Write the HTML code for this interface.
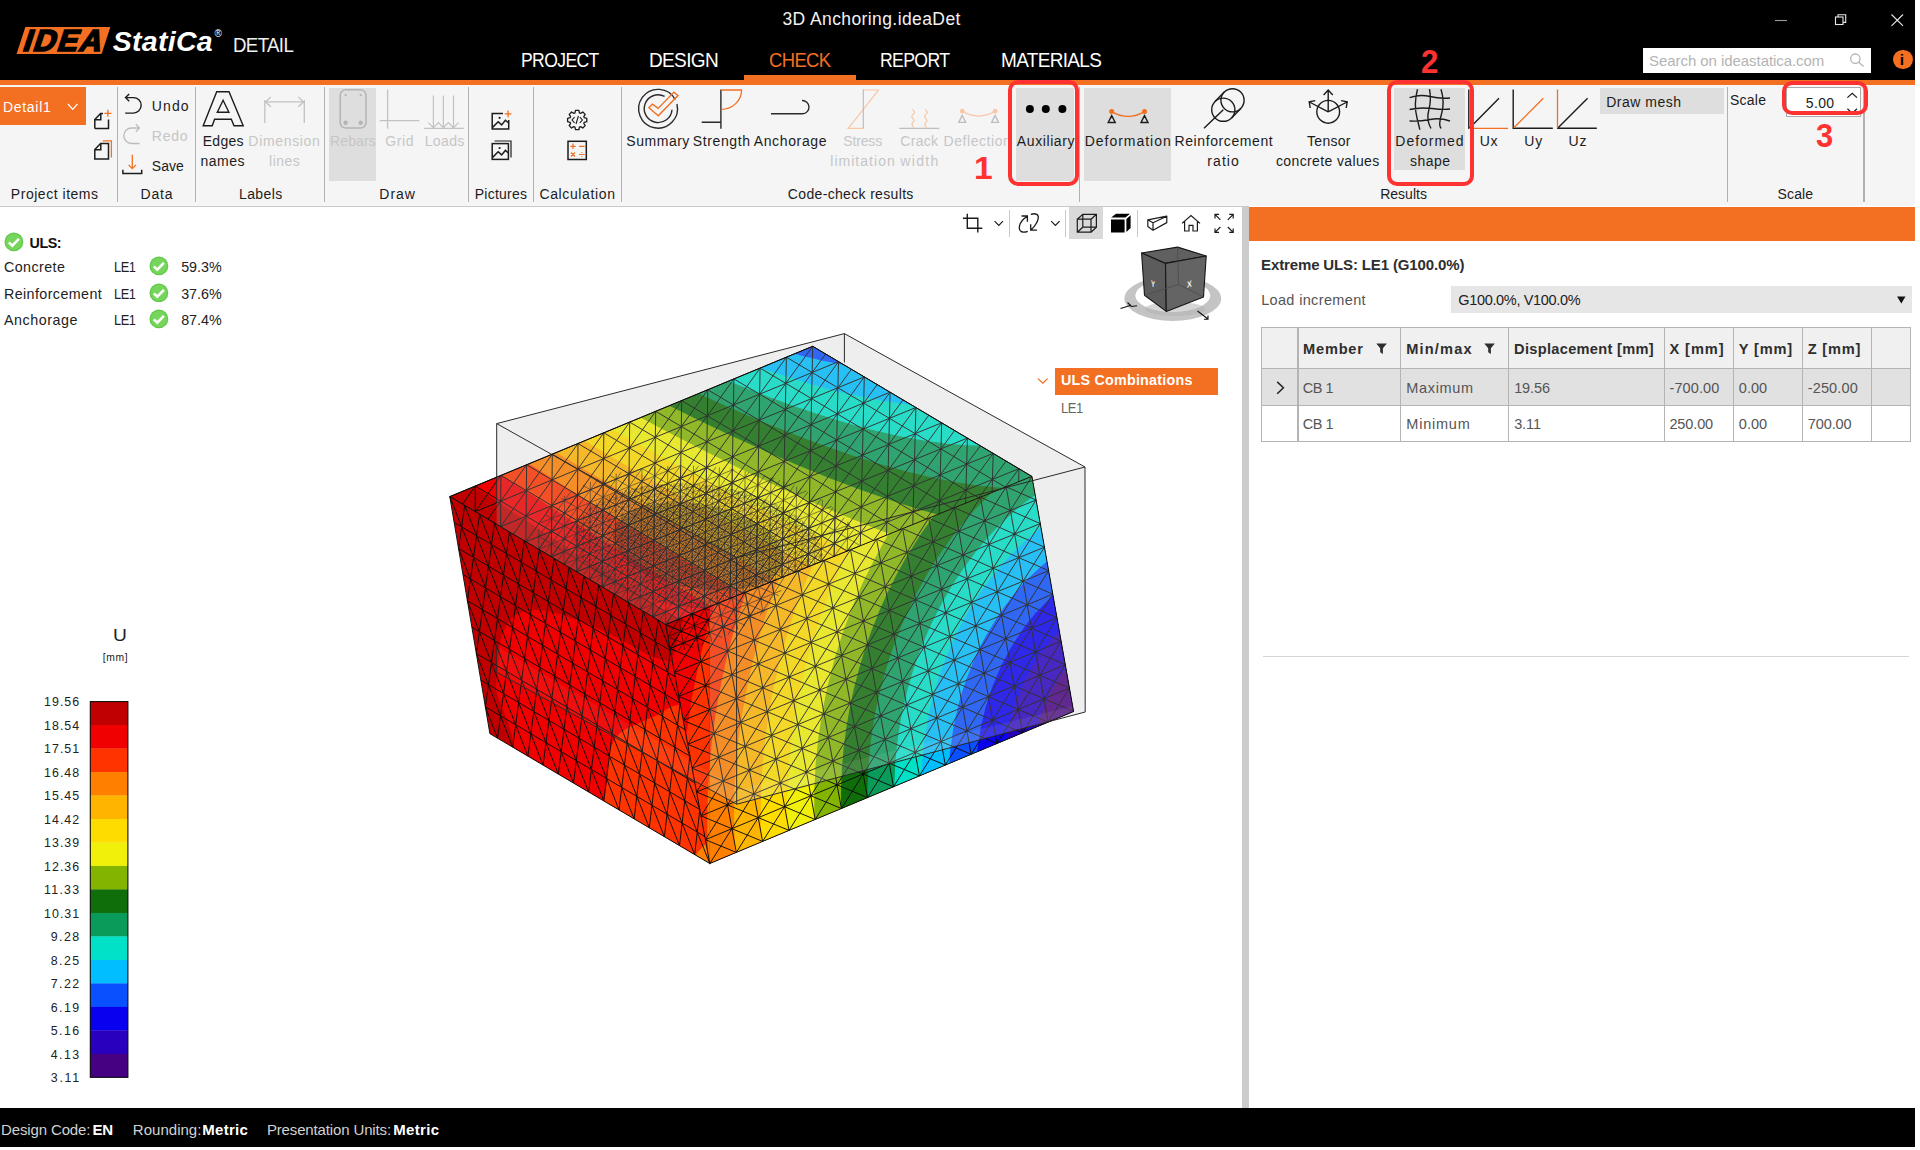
<!DOCTYPE html>
<html lang="en"><head><meta charset="utf-8"><title>IDEA StatiCa Detail - 3D Anchoring</title><style>html,body{margin:0;padding:0;background:#fff}
body{width:1920px;height:1150px;position:relative;overflow:hidden;font-family:"Liberation Sans",sans-serif}
.abs{position:absolute}
.t{position:absolute;white-space:nowrap;transform-origin:0 0}
</style></head><body>
<svg class="abs" style="left:420px;top:320px" width="690" height="560" viewBox="420 320 690 560">
<defs>
<clipPath id="ct"><polygon points="449.8,496.6 812.7,346.3 1031.9,476.4 665.5,624.5"/></clipPath>
<clipPath id="cr"><polygon points="665.5,624.5 1031.9,476.4 1073.6,711.5 709.8,863.5"/></clipPath>
<clipPath id="cl"><polygon points="449.8,496.6 665.5,624.5 709.8,863.5 489.9,733.7"/></clipPath>
<clipPath id="cs"><polygon points="665.5,624.5 709.6,606.7 709.6,865.5 709.8,863.5"/></clipPath>
<linearGradient id="lg1" x1="0" y1="0" x2="0" y2="1"><stop offset="0" stop-color="#fff" stop-opacity="0"/><stop offset="1" stop-color="#fff" stop-opacity="0.3"/></linearGradient>
</defs>
<polygon points="496.7,423.6 844.4,333.6 1085.0,467.0 1085.2,712.0 736.7,804.2 496.3,672.0" fill="#f8f8f8"/>
<g><g clip-path="url(#cr)">
<polygon points="665.5,624.5 1031.9,476.4 1073.6,711.5 709.8,863.5" fill="#c00000"/>
<path d="M739.6 472.4L1079.5 472.4L1079.5 868.4L661.5 868.4L661.5 722.9L664.9 700.4L668.9 678.4L675.0 650.4L681.5 624.4L689.0 598.4L697.4 572.4L706.8 546.4L716.5 522.4L727.5 497.4Z" fill="#f00000"/>
<path d="M769.6 472.4L1079.5 472.4L1079.5 868.4L682.0 868.4L681.0 844.4L680.7 818.4L681.4 792.4L683.1 766.4L685.7 740.4L689.2 714.4L693.5 688.9L698.5 664.4L704.8 638.4L711.4 614.4L718.9 590.4L727.5 565.8L736.6 542.4L746.9 518.4L758.2 494.4Z" fill="#ff3300"/>
<path d="M800.1 472.4L1079.5 472.4L1079.5 868.4L709.0 868.4L707.8 844.4L707.3 818.4L707.9 792.4L709.5 766.4L712.1 740.4L715.6 714.4L720.2 688.4L725.2 664.4L731.7 638.4L738.6 614.4L747.2 588.4L756.1 564.4L766.0 540.4L776.9 516.4L788.0 494.4Z" fill="#ff8000"/>
<path d="M831.4 472.4L1079.5 472.4L1079.5 868.4L736.2 868.4L734.6 844.4L734.0 818.4L734.4 792.4L735.9 766.4L738.5 740.4L742.1 714.4L746.8 688.4L752.5 662.4L759.4 636.4L766.7 612.4L775.0 588.4L784.4 564.4L794.9 540.4L806.5 516.4L818.4 494.4Z" fill="#ffb400"/>
<path d="M863.7 472.4L1079.5 472.4L1079.5 868.4L763.4 868.4L761.6 844.4L760.7 818.4L761.0 792.4L762.4 766.4L765.0 740.4L768.6 714.4L773.4 688.4L779.4 662.4L786.6 636.4L794.3 612.4L803.8 586.4L813.9 562.4L825.2 538.4L836.7 516.4L849.5 494.4Z" fill="#ffdc00"/>
<path d="M897.3 472.4L1079.5 472.4L1079.5 868.4L790.9 868.4L788.5 842.4L787.4 816.4L787.6 790.4L789.1 764.4L791.7 738.4L795.5 712.4L800.6 686.4L806.9 660.4L814.6 634.4L823.5 608.5L833.1 584.4L844.0 560.4L856.3 536.4L868.9 514.4L883.0 492.4Z" fill="#f0f00a"/>
<path d="M932.8 472.4L1079.5 472.4L1079.5 868.4L818.5 868.4L815.7 842.4L814.3 816.4L814.3 790.4L815.6 764.4L818.5 736.4L822.5 710.4L827.9 684.4L834.7 658.4L842.8 632.4L852.5 606.4L862.9 582.4L874.8 558.4L887.5 535.8L901.5 513.7L916.7 492.4Z" fill="#82b400"/>
<path d="M1079.5 472.4L1079.5 868.4L846.4 868.4L843.7 848.4L841.9 828.4L841.0 808.4L841.0 788.4L841.9 768.4L843.6 748.4L846.2 728.4L849.6 708.4L853.9 688.4L859.1 668.4L865.2 648.4L871.5 630.4L879.5 610.4L887.6 592.4L896.6 574.4L906.6 556.4L921.5 532.9L937.5 510.8L953.5 491.5L971.5 472.4Z" fill="#0f6e0a"/>
<path d="M1079.5 472.4L1079.5 868.4L874.4 868.4L871.7 852.4L869.5 834.4L868.2 818.4L867.5 800.4L867.6 784.4L868.4 766.4L869.9 748.4L872.3 730.4L875.3 712.4L879.2 694.4L883.9 676.4L888.7 660.4L894.9 642.4L901.2 626.4L908.2 610.4L916.1 594.4L925.9 576.4L937.0 558.4L948.1 542.4L960.4 526.4L973.5 511.1L987.5 496.6L1001.5 483.6L1015.1 472.4Z" fill="#0a9b5a"/>
<path d="M1079.5 472.4L1079.5 868.4L903.2 868.4L900.3 854.4L897.9 840.4L896.2 826.4L895.0 810.4L894.4 796.4L894.5 780.4L895.2 764.4L896.6 748.4L898.7 732.4L901.1 718.4L904.4 702.4L907.9 688.4L912.5 672.4L917.2 658.4L922.5 644.4L928.4 630.4L935.0 616.4L942.3 602.4L949.5 589.8L958.0 576.4L966.3 564.4L975.5 552.2L985.5 540.2L995.5 529.3L1006.6 518.4L1017.5 508.6L1029.5 499.0L1041.5 490.4L1057.5 480.5L1072.9 472.4Z" fill="#00e1c8"/>
<path d="M1079.5 504.4L1079.5 868.4L932.7 868.4L929.6 856.4L927.0 844.4L924.9 832.4L923.1 818.4L922.1 806.4L921.5 792.4L921.5 778.4L922.1 764.4L923.2 750.4L924.9 736.4L929.7 710.4L933.1 696.4L937.2 682.4L941.5 669.3L946.4 656.4L952.3 642.4L958.0 630.4L964.4 618.4L971.3 606.4L979.0 594.4L986.0 584.4L993.7 574.4L1002.1 564.4L1011.3 554.4L1019.5 546.2L1029.5 537.2L1039.5 529.1L1049.5 521.8L1059.5 515.3L1069.5 509.5Z" fill="#00beff"/>
<path d="M1079.5 539.8L1079.5 868.4L963.4 868.4L960.0 858.4L956.6 846.4L952.1 824.4L950.4 812.4L949.3 800.4L948.7 788.4L948.6 776.4L950.0 752.4L953.2 728.4L958.5 704.4L961.9 692.4L965.9 680.4L974.6 658.4L979.5 648.0L985.5 636.4L997.6 616.4L1004.6 606.4L1012.3 596.4L1019.5 587.8L1027.5 579.2L1035.5 571.4L1043.5 564.3L1051.5 557.8L1061.5 550.6L1069.5 545.5Z" fill="#0a50ff"/>
<path d="M1079.5 576.1L1079.5 868.4L996.1 868.4L992.5 860.4L988.5 850.4L985.2 840.4L982.5 830.4L978.5 810.4L976.4 790.4L976.1 770.4L977.5 748.4L981.0 726.4L985.8 706.4L992.4 686.4L1000.8 666.4L1010.3 648.4L1022.0 630.4L1027.9 622.4L1035.5 613.3L1049.5 598.8L1063.5 586.9L1071.5 581.2Z" fill="#0a00f0"/>
<path d="M1079.5 613.6L1079.5 868.4L1033.4 868.4L1029.1 862.4L1024.2 854.4L1017.3 840.4L1011.4 824.4L1007.4 808.4L1004.7 790.4L1003.8 772.4L1004.5 754.4L1007.2 734.4L1011.3 716.4L1017.1 698.4L1024.7 680.4L1033.4 664.4L1043.5 649.3L1054.1 636.4L1066.1 624.4Z" fill="#2800be"/>
<path d="M1079.5 654.0L1079.5 863.6L1069.3 856.4L1064.8 852.4L1059.5 846.9L1051.5 836.3L1044.8 824.4L1039.1 810.4L1035.4 796.4L1033.2 782.4L1032.3 766.4L1033.2 750.4L1035.6 734.4L1039.8 718.4L1044.9 704.4L1051.6 690.4L1060.1 676.4L1069.5 664.3Z" fill="#460082"/>
</g>
<path d="M692.2 613.7L736.3 852.4M718.7 603.0L762.6 841.4M745.2 592.3L789.0 830.4M771.7 581.6L815.2 819.5M798.0 570.9L841.4 808.5M824.3 560.3L867.5 797.6M850.5 549.7L893.5 786.8M876.6 539.2L919.4 775.9M902.7 528.6L945.3 765.1M928.7 518.1L971.1 754.3M954.6 507.7L996.8 743.6M980.4 497.2L1022.5 732.9M1006.2 486.8L1048.1 722.2M669.9 648.5L1036.1 500.0M674.4 672.5L1040.3 523.6M678.8 696.4L1044.5 547.2M683.3 720.4L1048.6 570.7M687.7 744.3L1052.8 594.2M692.1 768.2L1057.0 617.7M696.6 792.0L1061.1 641.2M701.0 815.9L1065.3 664.7M705.4 839.7L1069.4 688.1M705.4 839.7L736.3 852.4M701.0 815.9L762.6 841.4M696.6 792.0L789.0 830.4M692.1 768.2L815.2 819.5M687.7 744.3L841.4 808.5M683.3 720.4L867.5 797.6M678.8 696.4L893.5 786.8M674.4 672.5L919.4 775.9M669.9 648.5L945.3 765.1M665.5 624.5L971.1 754.3M692.2 613.7L996.8 743.6M692.2 613.7L669.9 648.5M718.7 603.0L1022.5 732.9M718.7 603.0L674.4 672.5M745.2 592.3L1048.1 722.2M745.2 592.3L678.8 696.4M771.7 581.6L1073.6 711.5M771.7 581.6L683.3 720.4M798.0 570.9L1069.4 688.1M798.0 570.9L687.7 744.3M824.3 560.3L1065.3 664.7M824.3 560.3L692.1 768.2M850.5 549.7L1061.1 641.2M850.5 549.7L696.6 792.0M876.6 539.2L1057.0 617.7M876.6 539.2L701.0 815.9M902.7 528.6L1052.8 594.2M902.7 528.6L705.4 839.7M928.7 518.1L1048.6 570.7M928.7 518.1L709.8 863.5M954.6 507.7L1044.5 547.2M954.6 507.7L736.3 852.4M980.4 497.2L1040.3 523.6M980.4 497.2L762.6 841.4M1006.2 486.8L1036.1 500.0M1006.2 486.8L789.0 830.4M1031.9 476.4L815.2 819.5M1036.1 500.0L841.4 808.5M1040.3 523.6L867.5 797.6M1044.5 547.2L893.5 786.8M1048.6 570.7L919.4 775.9M1052.8 594.2L945.3 765.1M1057.0 617.7L971.1 754.3M1061.1 641.2L996.8 743.6M1065.3 664.7L1022.5 732.9M1069.4 688.1L1048.1 722.2" stroke="#0c0c0c" stroke-width="1" fill="none" stroke-opacity="0.95"/>
<path d="M665.5 624.5L670.5 651.4M678.8 619.1L684.5 649.6M692.2 613.7L698.2 646.3M705.4 608.4L711.6 641.8M718.7 603.0L724.9 636.3M732.0 597.6L737.9 629.7M745.2 592.3L750.6 621.8M758.4 586.9L763.1 612.4M771.7 581.6L775.1 600.3M665.5 624.5L784.3 576.5M667.7 636.5L781.6 590.4M669.9 648.5L766.5 609.3M669.9 648.5L675.6 650.9M667.7 636.5L693.7 647.5M665.5 624.5L708.8 642.9M678.8 619.1L722.1 637.5M678.8 619.1L667.7 636.5M692.2 613.7L734.2 631.7M692.2 613.7L669.9 648.5M705.4 608.4L745.2 625.3M705.4 608.4L678.5 650.5M718.7 603.0L755.2 618.6M718.7 603.0L689.7 648.5M732.0 597.6L764.2 611.4M732.0 597.6L701.6 645.3M745.2 592.3L772.1 603.8M745.2 592.3L714.3 640.8M758.4 586.9L778.6 595.6M758.4 586.9L727.9 634.8M771.7 581.6L783.2 586.6M771.7 581.6L742.9 626.8M784.4 577.0L760.5 614.6" stroke="#0c0c0c" stroke-width="0.8" fill="none" stroke-opacity="0.8"/></g>
<g clip-path="url(#ct)">
<polygon points="449.8,496.6 812.7,346.3 1031.9,476.4 665.5,624.5" fill="#c00000"/>
<path d="M445.8 342.3L1037.8 342.3L1037.8 630.3L696.9 630.3L635.8 592.0L573.8 552.1L511.8 511.3L445.8 466.9Z" fill="#f00000"/>
<path d="M445.8 342.3L1037.8 342.3L1037.8 630.3L750.6 630.3L677.8 586.7L603.8 540.8L525.8 490.9L445.8 438.0Z" fill="#ff3300"/>
<path d="M445.8 342.3L1037.8 342.3L1037.8 630.3L808.8 630.3L767.8 607.6L723.8 582.5L679.8 556.7L635.8 530.3L589.8 502.1L543.8 473.2L493.8 441.2L445.8 409.8Z" fill="#ff8000"/>
<path d="M445.8 342.3L1037.8 342.3L1037.8 630.3L874.2 630.3L825.8 606.0L775.8 579.6L723.8 551.1L671.8 521.4L617.8 489.6L561.8 455.7L503.8 419.5L445.8 382.3Z" fill="#ffb400"/>
<path d="M445.8 342.3L1037.8 342.3L1037.8 630.3L953.5 630.3L923.8 617.9L893.8 604.8L863.8 591.0L831.8 575.7L799.8 559.9L765.8 542.5L697.8 506.0L625.8 465.3L551.8 421.5L499.8 389.6L445.8 355.7Z" fill="#ffdc00"/>
<path d="M465.7 342.3L1037.8 342.3L1037.8 619.9L1009.8 611.9L981.8 603.0L951.8 592.6L921.8 581.2L889.8 568.3L855.8 553.7L821.8 538.3L785.8 521.2L749.8 503.4L711.8 483.8L673.8 463.5L633.8 441.5L593.8 418.8L551.8 394.4L509.8 369.3Z" fill="#f0f00a"/>
<path d="M507.4 342.3L1037.8 342.3L1037.8 577.4L1013.8 572.4L987.8 566.0L959.8 557.9L931.8 549.0L901.8 538.4L871.8 527.0L839.8 514.0L807.8 500.2L773.8 484.7L737.8 467.5L701.8 449.6L665.8 431.0L627.8 410.7L587.8 388.6L547.8 365.9Z" fill="#82b400"/>
<path d="M550.3 342.3L1037.8 342.3L1037.8 533.6L1015.8 531.1L993.8 527.6L969.8 522.6L943.8 516.2L917.8 508.9L889.8 500.0L859.8 489.5L829.8 478.2L797.8 465.2L765.8 451.4L731.8 436.0L697.8 419.8L661.8 401.9L625.8 383.3L587.8 363.0Z" fill="#0f6e0a"/>
<path d="M594.5 342.3L1037.8 342.3L1037.8 488.3L1017.8 488.6L997.8 487.6L975.8 485.3L953.8 481.8L929.8 477.0L905.8 471.2L879.8 464.0L851.8 455.2L823.8 445.6L793.8 434.3L763.8 422.3L731.8 408.6L697.8 393.3L663.8 377.2L629.8 360.4Z" fill="#0a9b5a"/>
<path d="M641.8 342.3L1037.8 342.3L1037.8 439.5L1021.8 442.9L1003.8 445.0L985.8 445.7L965.8 445.2L945.8 443.6L923.8 440.6L899.8 436.2L875.8 430.8L849.8 423.9L823.8 416.0L795.8 406.7L767.8 396.5L737.8 384.8L705.8 371.4L673.8 357.2Z" fill="#00e1c8"/>
<path d="M693.7 342.3L1037.8 342.3L1037.8 385.3L1025.8 391.8L1011.8 397.3L995.8 401.8L979.8 404.7L961.8 406.4L943.8 406.8L923.8 406.0L903.8 404.0L881.8 400.8L857.8 396.1L833.8 390.4L807.8 383.2L781.8 375.1L753.8 365.6L725.8 355.1Z" fill="#00beff"/>
<path d="M755.7 342.3L1016.1 342.3L1005.8 349.7L995.8 355.4L983.8 360.7L971.8 364.7L957.8 368.1L943.8 370.3L929.8 371.6L913.8 372.1L897.8 371.6L879.8 370.2L861.8 368.0L841.8 364.6L821.8 360.5L799.8 355.2L777.8 349.1Z" fill="#0a50ff"/>
</g>
<path d="M449.8 496.6L812.7 346.3M449.8 496.6L665.5 624.5M475.2 511.7L838.5 361.6M475.3 486.0L475.2 511.7M475.3 486.0L691.3 614.1M462.5 504.1L475.3 486.0M500.6 526.7L864.3 376.9M500.9 475.4L500.6 526.7M500.9 475.4L717.1 603.6M475.2 511.7L500.9 475.4M525.9 541.8L890.1 392.2M526.6 464.8L525.9 541.8M526.6 464.8L743.0 593.2M487.9 519.2L526.6 464.8M551.3 556.8L915.9 407.5M552.3 454.2L551.3 556.8M552.3 454.2L768.9 582.7M500.6 526.7L552.3 454.2M576.7 571.8L941.7 422.8M578.0 443.5L576.7 571.8M578.0 443.5L795.0 572.2M513.3 534.2L578.0 443.5M602.1 586.9L967.4 438.1M603.8 432.8L602.1 586.9M603.8 432.8L821.0 561.6M525.9 541.8L603.8 432.8M627.4 601.9L993.2 453.4M629.7 422.1L627.4 601.9M629.7 422.1L847.2 551.1M538.6 549.3L629.7 422.1M652.8 617.0L1019.0 468.7M655.7 411.3L652.8 617.0M655.7 411.3L873.4 540.5M551.3 556.8L655.7 411.3M681.7 400.6L678.4 619.3M681.7 400.6L899.6 529.9M564.0 564.3L681.7 400.6M707.8 389.8L704.2 608.9M707.8 389.8L926.0 519.2M576.7 571.8L707.8 389.8M733.9 378.9L730.0 598.4M733.9 378.9L952.4 508.6M589.4 579.4L733.9 378.9M760.1 368.1L756.0 587.9M760.1 368.1L978.8 497.9M602.1 586.9L760.1 368.1M786.4 357.2L781.9 577.4M786.4 357.2L1005.3 487.1M614.8 594.4L786.4 357.2M812.7 346.3L808.0 566.9M812.7 346.3L1031.9 476.4M627.4 601.9L812.7 346.3M838.5 361.6L834.1 556.4M640.1 609.5L825.6 354.0M864.3 376.9L860.3 545.8M652.8 617.0L838.5 361.6M890.1 392.2L886.5 535.2M665.5 624.5L851.4 369.3M915.9 407.5L912.8 524.5M691.3 614.1L864.3 376.9M941.7 422.8L939.2 513.9M717.1 603.6L877.2 384.6M967.4 438.1L965.6 503.2M743.0 593.2L890.1 392.2M993.2 453.4L992.1 492.5M768.9 582.7L903.0 399.9M1019.0 468.7L1018.6 481.8M795.0 572.2L915.9 407.5M821.0 561.6L928.8 415.2M847.2 551.1L941.7 422.8M873.4 540.5L954.6 430.5M899.6 529.9L967.4 438.1M926.0 519.2L980.3 445.8M952.4 508.6L993.2 453.4M978.8 497.9L1006.1 461.1M1005.3 487.1L1019.0 468.7" stroke="#0c0c0c" stroke-width="1" fill="none" stroke-opacity="0.95"/>
<path d="M538.8 549.4L662.8 622.9M537.7 535.8L678.4 619.3M540.3 524.5L691.3 614.1M545.4 514.7L704.2 608.9M553.7 504.8L641.6 468.6M552.5 506.0L717.1 603.6M541.0 522.8L680.1 465.6M561.2 498.3L730.0 598.4M537.6 537.0L709.2 466.5M571.4 491.4L743.0 593.2M538.8 549.2L733.7 469.3M538.8 529.1L538.6 548.7M582.9 485.3L756.0 587.9M551.3 556.8L755.1 473.3M551.8 506.8L551.3 556.8M595.7 480.0L768.9 582.7M564.0 564.3L774.2 478.4M564.7 495.8L564.0 564.3M609.8 475.3L781.9 577.4M576.7 571.8L791.2 484.3M577.6 488.0L576.7 571.8M625.3 471.5L795.0 572.2M589.4 579.4L806.3 490.9M590.4 482.0L589.4 579.4M642.2 468.5L808.0 566.9M602.1 586.9L819.8 498.2M603.3 477.3L602.1 586.9M660.7 466.5L821.0 561.6M614.8 594.4L831.6 506.3M616.2 473.6L614.8 594.4M681.1 465.6L834.1 556.4M537.5 538.2L570.7 491.8M627.4 601.9L841.7 515.0M629.1 470.7L627.4 601.9M704.0 466.1L847.2 551.1M538.7 549.1L585.2 484.3M640.1 609.5L849.9 524.4M642.0 468.6L640.1 609.5M730.5 468.8L859.5 545.3M545.0 553.0L597.9 479.1M652.8 617.0L856.0 534.7M654.9 467.0L652.8 617.0M763.8 475.5L852.4 528.0M551.3 556.8L609.7 475.4M667.7 623.6L859.6 546.0M667.8 466.0L665.5 623.3M557.7 560.6L620.9 472.5M680.7 465.6L678.4 619.3M564.0 564.3L631.6 470.3M693.6 465.7L691.3 614.1M570.4 568.1L641.9 468.6M706.5 466.3L704.2 608.9M576.7 571.8L652.0 467.3M719.4 467.4L717.1 603.6M583.0 575.6L661.7 466.4M732.3 469.1L730.0 598.4M589.4 579.4L671.2 465.9M745.2 471.3L743.0 593.2M595.7 583.1L680.6 465.6M758.1 474.0L756.0 587.9M602.1 586.9L689.7 465.6M771.0 477.5L768.9 582.7M608.4 590.7L698.6 465.9M783.9 481.6L781.9 577.4M614.8 594.4L707.4 466.3M796.7 486.6L795.0 572.2M621.1 598.2L716.0 467.1M809.6 492.5L808.0 566.9M627.4 601.9L724.5 468.0M822.4 499.8L821.0 561.6M633.8 605.7L732.8 469.1M835.2 509.1L834.1 556.4M640.1 609.5L741.0 470.5M847.9 521.7L847.2 551.1M646.5 613.2L749.1 472.0M652.8 617.0L756.9 473.8M659.2 620.7L764.7 475.7M666.3 623.4L772.3 477.8M678.4 619.3L779.8 480.2M691.3 614.1L787.1 482.7M704.2 608.9L794.2 485.5M717.1 603.6L801.2 488.5M730.0 598.4L808.0 491.8M743.0 593.2L814.7 495.3M756.0 587.9L821.1 499.0M768.9 582.7L827.3 503.1M781.9 577.4L833.2 507.5M795.0 572.2L838.9 512.3M808.0 566.9L844.2 517.6M821.0 561.6L849.2 523.4M834.1 556.4L853.5 529.9M847.2 551.1L857.2 537.5" stroke="#0c0c0c" stroke-width="0.75" fill="none" stroke-opacity="0.78"/>
<path d="M588.4 565.9L638.9 595.9M579.6 554.3L660.5 602.3M575.9 545.7L677.1 605.7M574.6 538.5L691.3 607.6M574.8 532.1L703.9 608.7M576.1 526.5L710.6 606.3M578.3 521.4L717.1 603.6M581.3 516.7L723.6 601.0M584.9 512.3L730.0 598.4M586.8 510.4L646.6 485.8M589.1 508.3L736.5 595.8M579.1 519.9L667.2 483.8M593.8 504.7L743.0 593.2M575.8 527.7L683.4 483.5M599.0 501.3L749.5 590.6M574.6 534.5L697.4 484.2M604.7 498.2L756.0 587.9M574.8 540.8L710.0 485.4M610.8 495.4L762.5 585.3M576.2 546.6L721.4 487.2M617.5 492.8L768.9 582.7M578.4 552.1L732.0 489.2M624.6 490.6L775.4 580.1M581.4 557.2L741.8 491.6M632.1 488.6L781.9 577.4M585.0 562.1L751.0 494.3M640.2 486.9L788.4 574.8M589.2 566.7L759.6 497.2M577.2 523.7L576.9 548.7M648.8 485.5L795.0 572.2M593.9 571.2L767.6 500.3M583.7 513.6L583.2 559.8M658.0 484.4L801.5 569.5M599.1 575.4L775.1 503.6M590.2 507.4L589.5 567.1M667.8 483.7L808.0 566.9M604.9 579.4L782.2 507.2M596.6 502.7L595.8 572.8M678.3 483.5L814.5 564.3M611.1 583.2L788.7 510.9M603.1 499.0L602.2 577.6M689.7 483.7L821.0 561.6M617.8 586.9L794.8 514.8M609.5 495.9L608.5 581.7M702.1 484.6L822.7 556.1M624.9 590.3L800.3 519.0M616.0 493.4L614.9 585.3M716.0 486.3L821.9 549.1M632.6 593.5L805.4 523.3M622.4 491.2L621.2 588.6M731.9 489.2L818.9 540.8M640.8 596.5L809.9 527.9M628.9 489.4L627.6 591.5M752.0 494.6L811.9 530.2M649.5 599.3L813.9 532.6M635.3 487.8L633.9 594.0M658.8 601.9L817.2 537.7M641.8 486.6L640.3 596.4M668.9 604.1L819.9 543.0M648.2 485.6L646.7 598.5M679.7 606.1L821.7 548.6M654.7 484.7L653.0 600.3M691.5 607.7L822.6 554.6M661.1 484.1L659.4 602.0M575.2 529.8L592.7 505.4M704.5 608.7L822.3 561.1M667.6 483.7L665.8 603.5M574.5 537.1L601.1 500.1M674.0 483.5L672.2 604.8M575.1 542.5L608.2 496.5M680.4 483.5L678.6 605.9M576.4 547.1L614.6 493.9M686.9 483.6L685.0 606.9M578.0 551.2L620.7 491.7M693.3 483.9L691.4 607.7M579.9 554.8L626.5 490.0M699.8 484.4L697.8 608.3M582.0 558.2L632.1 488.6M706.2 485.0L704.2 608.7M584.3 561.3L637.5 487.4M712.7 485.8L710.6 606.3M586.8 564.2L642.8 486.4M719.1 486.8L717.1 603.6M589.3 566.9L647.9 485.6M725.5 487.9L723.6 601.0M592.0 569.5L652.9 484.9M732.0 489.2L730.0 598.4M594.8 571.9L657.8 484.4M738.4 490.7L736.5 595.8M597.6 574.2L662.7 484.0M744.8 492.5L743.0 593.2M600.6 576.4L667.5 483.7M751.3 494.4L749.5 590.6M603.6 578.5L672.1 483.6M757.7 496.5L756.0 587.9M606.6 580.6L676.8 483.5M764.1 498.9L762.5 585.3M609.8 582.5L681.3 483.5M770.5 501.5L768.9 582.7M613.0 584.3L685.8 483.6M776.9 504.5L775.4 580.1M616.3 586.1L690.3 483.7M783.3 507.8L781.9 577.4M619.6 587.8L694.7 484.0M789.7 511.5L788.4 574.8M622.9 589.4L699.0 484.3M796.1 515.8L795.0 572.2M626.4 590.9L703.3 484.7M802.5 520.8L801.5 569.5M629.8 592.4L707.5 485.1M808.8 526.7L808.0 566.9M633.3 593.8L711.7 485.7M815.2 534.4L814.5 564.3M636.9 595.2L715.8 486.3M821.4 547.1L821.0 561.6M640.5 596.4L719.9 486.9M644.2 597.7L724.0 487.6M647.8 598.8L728.0 488.4M651.6 599.9L732.0 489.2M655.4 601.0L735.9 490.1M659.2 602.0L739.8 491.1M663.1 602.9L743.6 492.1M667.0 603.8L747.4 493.2M670.9 604.6L751.1 494.3M674.9 605.3L754.8 495.5M679.0 606.0L758.5 496.8M683.1 606.6L762.1 498.1M687.2 607.2L765.7 499.5M691.4 607.7L769.2 501.0M695.6 608.1L772.7 502.5M699.9 608.4L776.1 504.1M704.3 608.7L779.5 505.8M710.6 606.3L782.8 507.5M717.1 603.6L786.0 509.3M723.6 601.0L789.2 511.2M730.0 598.4L792.4 513.2M736.5 595.8L795.4 515.3M743.0 593.2L798.4 517.5M749.5 590.6L801.3 519.8M756.0 587.9L804.1 522.2M762.5 585.3L806.9 524.7M768.9 582.7L809.5 527.4M775.4 580.1L812.0 530.2M781.9 577.4L814.4 533.3M788.4 574.8L816.5 536.5M795.0 572.2L818.5 540.1M801.5 569.5L820.3 543.9M808.0 566.9L821.7 548.3M814.5 564.3L822.5 553.3M821.0 561.6L822.5 559.6" stroke="#0c0c0c" stroke-width="0.65" fill="none" stroke-opacity="0.72"/>
<path d="M625.5 559.0L659.7 579.3M619.3 552.1L672.3 583.5M616.1 546.9L682.0 586.1M614.2 542.6L690.3 587.8M613.2 538.8L697.7 588.9M612.9 535.4L704.5 589.7M613.1 532.3L710.8 590.2M613.7 529.4L716.6 590.5M614.6 526.7L722.1 590.5M615.9 524.3L727.3 590.3M617.4 521.9L732.2 590.0M619.2 519.8L736.9 589.6M621.3 517.8L741.3 589.0M623.5 515.9L745.5 588.2M626.0 514.1L749.5 587.3M629.4 512.0L642.2 506.8M628.7 512.5L753.3 586.4M619.8 519.2L658.2 503.4M631.6 510.9L756.9 585.3M616.1 523.9L668.3 502.5M634.7 509.5L760.3 584.0M614.2 527.9L676.7 502.3M637.9 508.2L763.5 582.7M613.2 531.5L684.0 502.5M641.4 507.1L766.5 581.2M612.9 534.8L690.7 502.9M645.1 506.0L769.3 579.6M613.1 537.9L696.9 503.6M649.0 505.1L771.9 577.9M613.7 540.8L702.8 504.4M653.1 504.2L774.3 576.1M614.6 543.7L708.2 505.4M657.4 503.5L776.4 574.2M615.8 546.4L713.4 506.4M661.9 503.0L778.4 572.1M617.2 548.9L718.4 507.6M666.7 502.6L780.1 569.8M618.8 551.5L723.1 508.9M671.8 502.4L781.5 567.4M620.7 553.9L727.6 510.2M677.1 502.3L782.6 564.9M622.8 556.2L732.0 511.6M682.8 502.4L783.4 562.1M625.0 558.5L736.1 513.1M688.9 502.8L783.9 559.1M627.4 560.7L740.1 514.7M695.4 503.4L783.8 555.8M629.9 562.8L743.9 516.4M702.6 504.4L783.2 552.2M632.6 564.9L747.6 518.1M710.4 505.8L781.8 548.1M635.5 566.9L751.1 519.8M719.4 507.9L779.4 543.4M638.5 568.9L754.5 521.7M730.4 511.1L774.9 537.5M641.7 570.8L757.7 523.5M747.5 518.0L764.3 528.0M645.0 572.6L760.7 525.5M648.5 574.4L763.6 527.5M652.1 576.1L766.4 529.6M655.8 577.7L769.0 531.7M615.6 524.8L615.4 545.5M659.8 579.3L771.4 533.9M618.9 520.2L618.5 550.9M663.9 580.8L773.7 536.2M622.1 517.0L621.6 555.0M668.1 582.2L775.8 538.5M625.4 514.5L624.8 558.3M672.6 583.6L777.7 540.9M628.6 512.5L628.0 561.2M677.3 584.9L779.4 543.5M631.8 510.8L631.1 563.8M682.1 586.1L780.8 546.0M635.0 509.4L634.3 566.1M687.3 587.2L782.1 548.7M638.3 508.1L637.5 568.2M692.7 588.2L783.0 551.5M641.5 507.0L640.7 570.2M698.4 589.0L783.7 554.5M644.7 506.1L643.8 572.0M704.5 589.7L783.9 557.5M647.9 505.3L647.0 573.6M711.1 590.2L783.7 560.8M651.2 504.6L650.2 575.2M718.3 590.5L782.8 564.4M654.4 504.0L653.4 576.7M726.3 590.4L781.1 568.2M657.6 503.5L656.6 578.0M736.0 589.7L777.8 572.7M660.8 503.1L659.7 579.3M749.6 587.3L770.5 578.9M664.1 502.8L662.9 580.5M667.3 502.6L666.1 581.6M670.5 502.4L669.3 582.6M673.7 502.3L672.5 583.6M676.9 502.3L675.7 584.5M680.2 502.3L678.9 585.3M683.4 502.4L682.1 586.1M686.6 502.6L685.3 586.8M689.8 502.8L688.5 587.4M693.0 503.1L691.7 588.0M696.2 503.5L694.9 588.5M699.5 503.9L698.1 589.0M702.7 504.4L701.3 589.4M705.9 504.9L704.5 589.7M709.1 505.5L707.7 590.0M712.3 506.2L710.9 590.2M715.5 506.9L714.1 590.4M613.5 530.2L624.1 515.4M718.7 507.7L717.3 590.5M612.9 534.1L628.4 512.6M721.9 508.5L720.5 590.5M613.0 537.2L632.1 510.7M725.2 509.5L723.8 590.5M613.4 539.8L635.4 509.2M728.4 510.4L727.0 590.4M614.0 542.1L638.6 508.0M731.6 511.5L730.2 590.2M614.8 544.2L641.6 507.0M734.8 512.6L733.4 589.9M615.6 546.1L644.4 506.2M738.0 513.9L736.6 589.6M616.6 547.9L647.2 505.5M741.2 515.2L739.8 589.2M617.6 549.6L650.0 504.8M744.4 516.6L743.1 588.7M618.7 551.3L652.6 504.3M747.6 518.1L746.3 588.1M619.9 552.8L655.2 503.9M750.8 519.7L749.5 587.3M621.1 554.3L657.8 503.5M754.0 521.4L752.8 586.5M622.3 555.7L660.3 503.2M757.2 523.2L756.0 585.5M623.6 557.1L662.7 502.9M760.4 525.2L759.2 584.4M624.9 558.4L665.2 502.7M763.6 527.4L762.5 583.1M626.3 559.7L667.6 502.5M766.7 529.8L765.7 581.6M627.6 560.9L669.9 502.4M769.9 532.5L769.0 579.8M629.0 562.1L672.3 502.3M773.1 535.6L772.3 577.7M630.5 563.3L674.6 502.3M776.3 539.1L775.5 575.0M631.9 564.4L676.9 502.3M779.4 543.5L778.8 571.5M633.4 565.5L679.1 502.3M782.5 549.9L782.2 566.0M634.9 566.5L681.4 502.4M636.5 567.6L683.6 502.4M638.0 568.6L685.8 502.6M639.6 569.5L688.0 502.7M641.2 570.5L690.1 502.9M642.8 571.4L692.3 503.1M644.4 572.3L694.4 503.3M646.0 573.1L696.5 503.5M647.7 574.0L698.6 503.8M649.4 574.8L700.6 504.1M651.1 575.6L702.7 504.4M652.8 576.4L704.7 504.7M654.5 577.1L706.8 505.1M656.2 577.9L708.8 505.5M658.0 578.6L710.8 505.9M659.8 579.3L712.7 506.3M661.5 580.0L714.7 506.7M663.3 580.6L716.7 507.2M665.1 581.3L718.6 507.7M667.0 581.9L720.5 508.2M668.8 582.5L722.4 508.7M670.7 583.0L724.3 509.2M672.5 583.6L726.2 509.8M674.4 584.1L728.1 510.3M676.3 584.6L729.9 510.9M678.2 585.1L731.7 511.6M680.2 585.6L733.6 512.2M682.1 586.1L735.4 512.9M684.1 586.5L737.2 513.5M686.0 586.9L738.9 514.2M688.0 587.3L740.7 515.0M690.0 587.7L742.5 515.7M692.0 588.1L744.2 516.5M694.1 588.4L745.9 517.3M696.1 588.7L747.6 518.1M698.2 589.0L749.3 518.9M700.3 589.3L750.9 519.7M702.4 589.5L752.6 520.6M704.5 589.7L754.2 521.5M706.6 589.9L755.8 522.4M708.8 590.1L757.4 523.4M711.0 590.2L759.0 524.4M713.1 590.3L760.6 525.4M715.4 590.4L762.1 526.4M717.6 590.5L763.6 527.5M719.9 590.5L765.1 528.6M722.1 590.5L766.6 529.7M724.5 590.5L768.0 530.9M726.8 590.4L769.4 532.1M729.2 590.2L770.8 533.3M731.6 590.1L772.1 534.6M734.0 589.9L773.4 535.9M736.5 589.6L774.7 537.3M739.0 589.3L776.0 538.7M741.5 588.9L777.2 540.2M744.1 588.5L778.3 541.8M746.8 588.0L779.4 543.5M749.5 587.3L780.4 545.2M752.4 586.6L781.3 547.0M755.3 585.8L782.2 549.0M758.3 584.8L782.9 551.1M761.5 583.6L783.5 553.5M764.8 582.0L783.8 556.1M768.6 580.1L783.9 559.2M773.1 577.1L783.1 563.3" stroke="#0c0c0c" stroke-width="0.5" fill="none" stroke-opacity="0.58"/>
<polygon points="496.7,423.6 844.4,333.6 1085.0,467.0 1085.2,712.0 736.7,804.2 496.3,672.0" fill="rgb(200,200,200)" fill-opacity="0.2"/>
<polygon points="736.7,804.2 1085.2,712.0 1085.2,703.0 736.7,790.2" fill="#fff" fill-opacity="0.07"/>
<g clip-path="url(#cs)">
<polygon points="665.5,624.5 709.6,606.7 709.6,865.5 709.8,863.5" fill="#c00000"/>
<path d="M687.7 602.7L715.5 602.7L715.5 870.7L661.5 870.7L661.5 722.9L666.3 692.7L672.2 662.7L679.3 632.7Z" fill="#f00000"/>
<path d="M715.5 602.7L715.5 870.7L682.2 870.7L680.8 836.7L681.1 802.7L682.9 768.7L686.4 734.7L691.7 698.7L698.4 664.7L703.2 644.7L707.9 626.7L714.9 602.7Z" fill="#ff3300"/>
<path d="M715.5 715.2L715.5 870.7L709.2 870.7L708.1 852.7L707.4 832.7L707.4 812.7L707.9 792.7L708.9 774.7L710.5 754.7L712.8 734.7Z" fill="#ff8000"/>
</g>
<g clip-path="url(#cs)"><path d="M692.2 613.7L736.3 852.4M718.7 603.0L762.6 841.4M669.9 648.5L744.3 618.3M674.4 672.5L748.7 642.2M678.8 696.4L753.1 666.1M683.3 720.4L757.5 690.0M687.7 744.3L761.9 713.8M692.1 768.2L766.2 737.6M696.6 792.0L770.6 761.4M701.0 815.9L775.0 785.2M705.4 839.7L779.3 808.9M705.4 839.7L736.3 852.4M701.0 815.9L762.6 841.4M696.6 792.0L782.8 827.9M692.1 768.2L778.5 804.2M687.7 744.3L774.1 780.4M683.3 720.4L769.7 756.6M678.8 696.4L765.4 732.9M674.4 672.5L761.0 709.0M669.9 648.5L756.6 685.2M665.5 624.5L752.2 661.3M692.2 613.7L747.8 637.5M692.2 613.7L669.9 648.5M718.7 603.0L743.5 613.6M718.7 603.0L674.4 672.5M740.8 599.2L678.8 696.4M745.2 623.1L683.3 720.4M749.6 647.0L687.7 744.3M754.0 670.9L692.1 768.2M758.4 694.7L696.6 792.0M762.7 718.6L701.0 815.9M767.1 742.4L705.4 839.7M771.5 766.2L709.8 863.5M775.9 789.9L736.3 852.4M780.2 813.7L762.6 841.4" stroke="#0c0c0c" stroke-width="1" fill="none" stroke-opacity="0.95"/>
<path d="M665.5 624.5L670.5 651.4M678.8 619.1L684.5 649.6M692.2 613.7L698.2 646.3M705.4 608.4L711.6 641.8M718.7 603.0L724.9 636.3M732.0 597.6L737.9 629.7M665.5 624.5L739.9 594.4M667.7 636.5L742.1 606.4M669.9 648.5L744.3 618.3M669.9 648.5L675.6 650.9M667.7 636.5L693.7 647.5M665.5 624.5L708.8 642.9M678.8 619.1L722.1 637.5M678.8 619.1L667.7 636.5M692.2 613.7L734.2 631.7M692.2 613.7L669.9 648.5M705.4 608.4L745.2 625.3M705.4 608.4L678.5 650.5M718.7 603.0L743.5 613.6M718.7 603.0L689.7 648.5M732.0 597.6L741.3 601.6M732.0 597.6L701.6 645.3M740.8 599.2L714.3 640.8M743.0 611.2L727.9 634.8M745.2 623.1L742.9 626.8" stroke="#0c0c0c" stroke-width="0.8" fill="none" stroke-opacity="0.8"/>
</g>
<g clip-path="url(#cl)">
<polygon points="449.8,496.6 665.5,624.5 709.8,863.5 489.9,733.7" fill="#c00000"/>
<path d="M513.8 616.2L517.8 613.7L521.8 612.0L527.8 610.5L533.8 609.9L539.8 610.0L545.8 610.7L559.8 613.9L577.8 620.2L599.8 629.2L615.8 637.1L643.7 652.6L651.8 656.5L659.8 659.3L667.8 660.9L673.8 660.7L681.8 657.9L692.1 652.6L713.8 639.8L713.8 868.6L508.4 868.6L514.9 842.6L519.1 820.6L521.1 802.6L521.0 786.6L520.3 778.6L518.7 768.6L511.0 732.6L507.3 720.6L497.8 697.1L496.3 690.6L496.0 686.6L498.4 662.6L499.3 646.6L500.4 640.6L503.0 632.6L505.8 626.5L509.8 620.3Z" fill="#f00000"/>
<path d="M713.8 703.7L713.8 868.6L589.7 868.6L600.3 820.6L604.6 798.6L606.6 784.6L608.3 762.6L609.7 752.6L612.0 744.6L613.8 740.6L615.8 737.4L620.6 732.6L626.7 728.6L633.8 725.2L655.8 715.8L667.8 708.6L672.1 706.6L677.8 705.0L683.8 704.1Z" fill="#ff3300"/>
<path d="M713.8 838.1L713.8 868.6L690.4 868.6L694.2 858.6L697.8 852.0L703.8 845.8Z" fill="#ff8000"/>
</g>
<path d="M454.2 522.5L670.3 650.6M458.6 548.5L675.2 676.8M463.0 574.6L680.1 703.1M467.4 600.8L685.0 729.6M471.9 627.2L689.9 756.1M476.4 653.6L694.8 782.8M480.9 680.2L699.8 809.6M485.4 706.9L704.8 836.5M485.4 706.9L497.5 738.2M476.4 653.6L512.7 747.2M467.4 600.8L527.9 756.1M458.6 548.5L543.1 765.1M449.8 496.6L558.3 774.1M464.7 505.4L573.5 783.0M464.7 505.4L458.6 548.5M479.6 514.3L588.6 792.0M479.6 514.3L467.4 600.8M494.5 523.1L603.8 800.9M494.5 523.1L476.4 653.6M509.4 532.0L619.0 809.9M509.4 532.0L485.4 706.9M524.3 540.8L634.1 818.8M524.3 540.8L497.5 738.2M539.2 549.6L649.3 827.8M539.2 549.6L512.7 747.2M554.1 558.4L664.4 836.7M554.1 558.4L527.9 756.1M569.0 567.3L679.5 845.6M569.0 567.3L543.1 765.1M583.8 576.1L694.7 854.6M583.8 576.1L558.3 774.1M598.7 584.9L709.8 863.5M598.7 584.9L573.5 783.0M613.5 593.7L699.8 809.6M613.5 593.7L588.6 792.0M628.4 602.5L689.9 756.1M628.4 602.5L603.8 800.9M643.2 611.3L680.1 703.1M643.2 611.3L619.0 809.9M658.1 620.1L670.3 650.6M658.1 620.1L634.1 818.8M670.3 650.6L649.3 827.8M680.1 703.1L664.4 836.7M689.9 756.1L679.5 845.6M699.8 809.6L694.7 854.6" stroke="#0c0c0c" stroke-width="1" fill="none" stroke-opacity="0.95"/>
<polygon points="496.3,672.0 736.7,804.2 736.7,788.2 496.3,646.0" fill="#fff" fill-opacity="0.06"/>
<path d="M449.8,496.6 665.5,624.5 1031.9,476.4 M665.5,624.5 709.8,863.5" stroke="#0c0c0c" stroke-width="1" fill="none" stroke-opacity="0.95"/>
<path d="M449.8,496.6 812.7,346.3 1031.9,476.4 1073.6,711.5 709.8,863.5 489.9,733.7Z" stroke="#0c0c0c" stroke-width="1" fill="none" stroke-linejoin="round"/>
<path d="M496.3,672.0 736.7,804.2 1085.2,712.0 1085.0,467.0 844.4,333.6 496.7,423.6 M496.7,423.6 736.5,557.8 1085.0,467.0 M736.5,557.8 736.7,804.2 M496.7,423.6V503 M496.3,645V672 M844.4,333.6V362.5" stroke="#2a2a2a" stroke-width="1" fill="none"/>
</svg>
<div class="abs" style="left:1242.3px;top:207px;width:6.5px;height:901px;background:#cccccc"></div>
<svg class="abs" style="left:4.0px;top:232.1px" width="19.8" height="19.8" viewBox="-9.9 -9.9 19.8 19.8"><circle r="9.4" fill="#62c848"/><circle r="8.1" fill="#76d65c"/><path d="M-5 0.4L-1.6 3.8L5 -3" fill="none" stroke="#fff" stroke-width="2.6"/></svg>
<span class="t" style="left:29.54px;top:235.60px;font-size:14.3px;line-height:14.3px;color:#111;font-weight:700;letter-spacing:-0.445px;">ULS:</span>
<span class="t" style="left:3.94px;top:260.20px;font-size:14.3px;line-height:14.3px;color:#222;letter-spacing:0.429px;">Concrete</span>
<span class="t" style="left:114.34px;top:260.20px;font-size:14.3px;line-height:14.3px;color:#222;letter-spacing:-0.501px;transform:scaleX(0.8951);">LE1</span>
<svg class="abs" style="left:149.2px;top:256.4px" width="19.8" height="19.8" viewBox="-9.9 -9.9 19.8 19.8"><circle r="9.4" fill="#62c848"/><circle r="8.1" fill="#76d65c"/><path d="M-5 0.4L-1.6 3.8L5 -3" fill="none" stroke="#fff" stroke-width="2.6"/></svg>
<span class="t" style="left:181.14px;top:260.20px;font-size:14.3px;line-height:14.3px;color:#222;letter-spacing:0.021px;">59.3%</span>
<span class="t" style="left:3.94px;top:286.50px;font-size:14.3px;line-height:14.3px;color:#222;letter-spacing:0.403px;">Reinforcement</span>
<span class="t" style="left:114.34px;top:286.50px;font-size:14.3px;line-height:14.3px;color:#222;letter-spacing:-0.501px;transform:scaleX(0.8951);">LE1</span>
<svg class="abs" style="left:149.2px;top:282.7px" width="19.8" height="19.8" viewBox="-9.9 -9.9 19.8 19.8"><circle r="9.4" fill="#62c848"/><circle r="8.1" fill="#76d65c"/><path d="M-5 0.4L-1.6 3.8L5 -3" fill="none" stroke="#fff" stroke-width="2.6"/></svg>
<span class="t" style="left:181.14px;top:286.50px;font-size:14.3px;line-height:14.3px;color:#222;letter-spacing:0.021px;">37.6%</span>
<span class="t" style="left:3.94px;top:312.90px;font-size:14.3px;line-height:14.3px;color:#222;letter-spacing:0.557px;">Anchorage</span>
<span class="t" style="left:114.34px;top:312.90px;font-size:14.3px;line-height:14.3px;color:#222;letter-spacing:-0.501px;transform:scaleX(0.8951);">LE1</span>
<svg class="abs" style="left:149.2px;top:309.1px" width="19.8" height="19.8" viewBox="-9.9 -9.9 19.8 19.8"><circle r="9.4" fill="#62c848"/><circle r="8.1" fill="#76d65c"/><path d="M-5 0.4L-1.6 3.8L5 -3" fill="none" stroke="#fff" stroke-width="2.6"/></svg>
<span class="t" style="left:181.14px;top:312.90px;font-size:14.3px;line-height:14.3px;color:#222;letter-spacing:0.021px;">87.4%</span>
<span class="t" style="left:113.24px;top:627.86px;font-size:16px;line-height:16px;color:#222;transform:scaleX(1.2);">U</span>
<span class="t" style="left:102.68px;top:652.88px;font-size:10.3px;line-height:10.3px;color:#222;letter-spacing:0.715px;">[mm]</span>
<svg class="abs" style="left:88px;top:699px" width="42" height="381" viewBox="88 699 42 381"><rect x="90" y="701.50" width="38" height="23.79" fill="#c00000"/><rect x="90" y="724.99" width="38" height="23.79" fill="#f00000"/><rect x="90" y="748.49" width="38" height="23.79" fill="#ff3300"/><rect x="90" y="771.98" width="38" height="23.79" fill="#ff8000"/><rect x="90" y="795.48" width="38" height="23.79" fill="#ffb400"/><rect x="90" y="818.97" width="38" height="23.79" fill="#ffdc00"/><rect x="90" y="842.46" width="38" height="23.79" fill="#f0f00a"/><rect x="90" y="865.96" width="38" height="23.79" fill="#82b400"/><rect x="90" y="889.45" width="38" height="23.79" fill="#0f6e0a"/><rect x="90" y="912.94" width="38" height="23.79" fill="#0a9b5a"/><rect x="90" y="936.44" width="38" height="23.79" fill="#00e1c8"/><rect x="90" y="959.93" width="38" height="23.79" fill="#00beff"/><rect x="90" y="983.43" width="38" height="23.79" fill="#0a50ff"/><rect x="90" y="1006.92" width="38" height="23.79" fill="#0a00f0"/><rect x="90" y="1030.41" width="38" height="23.79" fill="#2800be"/><rect x="90" y="1053.91" width="38" height="23.79" fill="#460082"/><rect x="90.3" y="701.6" width="37.6" height="375.7" fill="none" stroke="#111" stroke-width="1.1"/></svg>
<span class="t" style="left:44.06px;top:696.40px;font-size:12.4px;line-height:12.4px;color:#222;letter-spacing:1.027px;">19.56</span>
<span class="t" style="left:44.06px;top:719.90px;font-size:12.4px;line-height:12.4px;color:#222;letter-spacing:1.027px;">18.54</span>
<span class="t" style="left:44.06px;top:743.39px;font-size:12.4px;line-height:12.4px;color:#222;letter-spacing:1.027px;">17.51</span>
<span class="t" style="left:44.06px;top:766.88px;font-size:12.4px;line-height:12.4px;color:#222;letter-spacing:1.027px;">16.48</span>
<span class="t" style="left:44.06px;top:790.38px;font-size:12.4px;line-height:12.4px;color:#222;letter-spacing:1.027px;">15.45</span>
<span class="t" style="left:44.06px;top:813.87px;font-size:12.4px;line-height:12.4px;color:#222;letter-spacing:1.027px;">14.42</span>
<span class="t" style="left:44.06px;top:837.37px;font-size:12.4px;line-height:12.4px;color:#222;letter-spacing:1.027px;">13.39</span>
<span class="t" style="left:44.06px;top:860.86px;font-size:12.4px;line-height:12.4px;color:#222;letter-spacing:1.027px;">12.36</span>
<span class="t" style="left:44.06px;top:884.35px;font-size:12.4px;line-height:12.4px;color:#222;letter-spacing:1.257px;">11.33</span>
<span class="t" style="left:44.06px;top:907.85px;font-size:12.4px;line-height:12.4px;color:#222;letter-spacing:1.027px;">10.31</span>
<span class="t" style="left:50.76px;top:931.34px;font-size:12.4px;line-height:12.4px;color:#222;letter-spacing:1.435px;">9.28</span>
<span class="t" style="left:50.76px;top:954.83px;font-size:12.4px;line-height:12.4px;color:#222;letter-spacing:1.435px;">8.25</span>
<span class="t" style="left:50.76px;top:978.33px;font-size:12.4px;line-height:12.4px;color:#222;letter-spacing:1.435px;">7.22</span>
<span class="t" style="left:50.76px;top:1001.82px;font-size:12.4px;line-height:12.4px;color:#222;letter-spacing:1.435px;">6.19</span>
<span class="t" style="left:50.76px;top:1025.32px;font-size:12.4px;line-height:12.4px;color:#222;letter-spacing:1.435px;">5.16</span>
<span class="t" style="left:50.76px;top:1048.81px;font-size:12.4px;line-height:12.4px;color:#222;letter-spacing:1.435px;">4.13</span>
<span class="t" style="left:50.76px;top:1072.30px;font-size:12.4px;line-height:12.4px;color:#222;letter-spacing:1.742px;">3.11</span>
<div class="abs" style="left:1069.1px;top:207.3px;width:34.3px;height:31.8px;background:#d9d9d9"></div>
<div class="abs" style="left:1008.8px;top:209.7px;width:1.2px;height:27px;background:#c9c9c9"></div>
<div class="abs" style="left:1065.3000000000002px;top:209.7px;width:1.2px;height:27px;background:#c9c9c9"></div>
<div class="abs" style="left:1137.2px;top:209.7px;width:1.2px;height:27px;background:#c9c9c9"></div>
<svg class="abs" style="left:950px;top:207px" width="292" height="34" viewBox="950 207 292 34" fill="none" stroke="#1c1c1c" stroke-width="1.4"><path d="M967.3 213.7V228.3H982.3M962.9 218.2H977.8V232.6"/><path d="M994.6 221.2L998.8 225.4L1003 221.2" stroke-width="1.2"/><path d="M1027.7 231.4C1022 233.6 1018.4 231 1019.5 226C1020.4 222 1023.5 218.6 1027 216.6M1021.5 216H1027.4V221.8M1030.8 214.3C1036 212.8 1039 214.6 1038.2 218.6C1037.3 223 1034 227 1031 230M1030.7 224.2V230.2H1037.1" stroke-width="1.3"/><path d="M1051.2 221.2L1055.4 225.4L1059.6 221.2" stroke-width="1.2"/><path d="M1077.3 219.2H1091V232.2H1077.3ZM1077.3 219.2L1082.8 214.3H1096.4V227.2L1091 232.2M1091 219.2L1096.4 214.3M1077.3 232.2L1082.8 227.2H1096.4M1082.8 214.3V227.2" stroke-width="1.2"/><path d="M1111 219.4H1124.6V232.4H1111ZM1111.2 217.6L1116 213.8H1130L1125.4 217.6ZM1126.4 219L1130.6 215.2V228L1126.4 232Z" fill="#000" stroke="none"/><path d="M1147.8 219.8L1166.8 216.2V222.6L1153 230.2L1147.8 226.6ZM1147.8 219.8L1153 222.8L1166.8 216.2M1153 222.8V230.2" stroke-width="1.2" stroke-linejoin="round"/><path d="M1182 223.4L1191 215.6L1200 223.4M1184.6 221.6V231H1189V225.4H1193V231H1197.4V221.6" stroke-width="1.2"/><path d="M1215 218.4V214.4H1219M1215 214.4L1220.4 219.8M1229.2 214.4H1233.2V218.4M1233.2 214.4L1227.8 219.8M1215 228.4V232.4H1219M1215 232.4L1220.4 227M1229.2 232.4H1233.2V228.4M1233.2 232.4L1227.8 227" stroke-width="1.2"/></svg>
<svg class="abs" style="left:1110px;top:240px" width="130" height="90" viewBox="1110 240 130 90">
<defs><radialGradient id="rg" cx="0.5" cy="0.5" r="0.5"><stop offset="0" stop-color="#fff"/><stop offset="0.7" stop-color="#fff"/><stop offset="0.78" stop-color="#d0d0d0"/><stop offset="1" stop-color="#bdbdbd"/></radialGradient></defs>
<ellipse cx="1172.8" cy="298.5" rx="48.4" ry="22.4" fill="#c4c4c4"/>
<ellipse cx="1172.8" cy="295.5" rx="37.5" ry="16.5" fill="#fff"/>
<ellipse cx="1175" cy="309" rx="30" ry="7" fill="#b4b4b4" opacity="0.55"/>
<g stroke="#161616" stroke-width="1.1" stroke-linejoin="round">
<polygon points="1141.6,253 1177.6,247.1 1206.2,256 1165.5,263.4" fill="#606060"/>
<polygon points="1141.6,253 1165.5,263.4 1166.3,311.4 1144.5,295.3" fill="#5c5c5c"/>
<polygon points="1165.5,263.4 1206.2,256 1203.5,296.9 1166.3,311.4" fill="#646464"/>
</g>
<path d="M1177.6 247.1L1178.5 284.5L1144.5 295.3M1178.5 284.5L1203.5 296.9" stroke="#4a4a4a" stroke-width="0.8" fill="none"/>
<path d="M1120.5 308.5L1131 305.3M1127.5 302.5L1131.5 306.5L1137 305.8M1197.5 311L1208 319M1208 315.5V319.3H1204" stroke="#111" stroke-width="1.1" fill="none"/>
</svg>
<span class="t" style="left:1150.99px;top:279.30px;font-size:8.5px;line-height:8.5px;color:#f4f4f4;font-weight:700;transform:skewY(22deg) scaleX(0.7);">Y</span>
<span class="t" style="left:1186.96px;top:280.88px;font-size:9px;line-height:9px;color:#f4f4f4;font-weight:700;transform:skewY(-18deg) scaleX(0.8);">X</span>
<div class="abs" style="left:1055.3px;top:368.2px;width:162.7px;height:27.2px;background:#f36f21"></div>
<span class="t" style="left:1060.94px;top:373.10px;font-size:14.3px;line-height:14.3px;color:#fff;font-weight:700;letter-spacing:0.235px;">ULS Combinations</span>
<span class="t" style="left:1061.16px;top:401.35px;font-size:14px;line-height:14px;color:#666;letter-spacing:-0.490px;transform:scaleX(0.932);">LE1</span>
<svg class="abs" style="left:1036px;top:376px" width="14" height="10" viewBox="1036 376 14 10"><path d="M1038 378.6L1042.8 383.2L1047.6 378.6" fill="none" stroke="#f36f21" stroke-width="1.3"/></svg>
<div class="abs" style="left:0;top:1108px;width:1915px;height:38.8px;background:#000"></div>
<span class="t" style="left:1.10px;top:1122.10px;font-size:15px;line-height:15px;color:#d2d2d2;letter-spacing:-0.144px;">Design Code:</span>
<span class="t" style="left:92.50px;top:1122.10px;font-size:15px;line-height:15px;color:#fff;font-weight:700;letter-spacing:-0.138px;">EN</span>
<span class="t" style="left:132.80px;top:1122.10px;font-size:15px;line-height:15px;color:#d2d2d2;letter-spacing:0.026px;">Rounding:</span>
<span class="t" style="left:202.30px;top:1122.10px;font-size:15px;line-height:15px;color:#fff;font-weight:700;letter-spacing:0.264px;">Metric</span>
<span class="t" style="left:266.90px;top:1122.10px;font-size:15px;line-height:15px;color:#d2d2d2;letter-spacing:-0.141px;">Presentation Units:</span>
<span class="t" style="left:393.20px;top:1122.10px;font-size:15px;line-height:15px;color:#fff;font-weight:700;letter-spacing:0.324px;">Metric</span>
<div class="abs" style="left:1248.8px;top:206.6px;width:666px;height:34px;background:#f36f21"></div>
<span class="t" style="left:1261.10px;top:256.60px;font-size:15px;line-height:15px;color:#2e2e2e;font-weight:700;letter-spacing:-0.138px;">Extreme ULS: LE1 (G100.0%)</span>
<span class="t" style="left:1261.13px;top:293.13px;font-size:14.5px;line-height:14.5px;color:#555;letter-spacing:0.346px;">Load increment</span>
<div class="abs" style="left:1450.8px;top:285.7px;width:461.1px;height:27.8px;background:#e6e6e6"></div>
<span class="t" style="left:1458.33px;top:293.13px;font-size:14.5px;line-height:14.5px;color:#222;letter-spacing:-0.341px;">G100.0%, V100.0%</span>
<svg class="abs" style="left:1896px;top:295px" width="11" height="10" viewBox="1896 295 11 10"><path d="M1897.1 296.5H1905.5L1901.3 303.4Z" fill="#111"/></svg>
<div class="abs" style="left:1261.4px;top:327.7px;width:649.2px;height:40.7px;background:#f0f0f0"></div>
<div class="abs" style="left:1261.4px;top:368.4px;width:649.2px;height:36.9px;background:#e1e1e1"></div>
<div class="abs" style="left:1261.4px;top:327.0px;width:649.2px;height:1.4px;background:#b4b4b4"></div>
<div class="abs" style="left:1261.4px;top:367.7px;width:649.2px;height:1.4px;background:#b4b4b4"></div>
<div class="abs" style="left:1261.4px;top:404.6px;width:649.2px;height:1.4px;background:#b4b4b4"></div>
<div class="abs" style="left:1261.4px;top:441.1px;width:649.2px;height:1.4px;background:#b4b4b4"></div>
<div class="abs" style="left:1260.7px;top:327.7px;width:1.4px;height:114.1px;background:#b4b4b4"></div>
<div class="abs" style="left:1297.4px;top:327.7px;width:1.4px;height:114.1px;background:#b4b4b4"></div>
<div class="abs" style="left:1400.0px;top:327.7px;width:1.4px;height:114.1px;background:#b4b4b4"></div>
<div class="abs" style="left:1507.8px;top:327.7px;width:1.4px;height:114.1px;background:#b4b4b4"></div>
<div class="abs" style="left:1663.7px;top:327.7px;width:1.4px;height:114.1px;background:#b4b4b4"></div>
<div class="abs" style="left:1732.7px;top:327.7px;width:1.4px;height:114.1px;background:#b4b4b4"></div>
<div class="abs" style="left:1801.8px;top:327.7px;width:1.4px;height:114.1px;background:#b4b4b4"></div>
<div class="abs" style="left:1870.5px;top:327.7px;width:1.4px;height:114.1px;background:#b4b4b4"></div>
<div class="abs" style="left:1909.9px;top:327.7px;width:1.4px;height:114.1px;background:#b4b4b4"></div>
<span class="t" style="left:1303.12px;top:341.74px;font-size:14.6px;line-height:14.6px;color:#2e2e2e;font-weight:700;letter-spacing:0.775px;">Member</span>
<span class="t" style="left:1406.32px;top:341.74px;font-size:14.6px;line-height:14.6px;color:#2e2e2e;font-weight:700;letter-spacing:1.141px;">Min/max</span>
<span class="t" style="left:1514.12px;top:341.74px;font-size:14.6px;line-height:14.6px;color:#2e2e2e;font-weight:700;letter-spacing:0.305px;">Displacement [mm]</span>
<span class="t" style="left:1669.42px;top:341.74px;font-size:14.6px;line-height:14.6px;color:#2e2e2e;font-weight:700;letter-spacing:0.955px;">X [mm]</span>
<span class="t" style="left:1738.82px;top:341.74px;font-size:14.6px;line-height:14.6px;color:#2e2e2e;font-weight:700;letter-spacing:0.828px;">Y [mm]</span>
<span class="t" style="left:1807.72px;top:341.74px;font-size:14.6px;line-height:14.6px;color:#2e2e2e;font-weight:700;letter-spacing:0.820px;">Z [mm]</span>
<svg class="abs" style="left:1376px;top:343px" width="12" height="12" viewBox="0 0 12 12"><path d="M0.3 0.4H10.8L6.9 5.2V11L4.2 9.2V5.2Z" fill="#2e2e2e"/></svg>
<svg class="abs" style="left:1483.8px;top:343px" width="12" height="12" viewBox="0 0 12 12"><path d="M0.3 0.4H10.8L6.9 5.2V11L4.2 9.2V5.2Z" fill="#2e2e2e"/></svg>
<svg class="abs" style="left:1275px;top:380px" width="12" height="16" viewBox="1275 380 12 16"><path d="M1277.2 381.9L1283.4 387.8L1277.2 393.7" fill="none" stroke="#222" stroke-width="1.5"/></svg>
<span class="t" style="left:1302.83px;top:380.73px;font-size:14.5px;line-height:14.5px;color:#555;letter-spacing:-0.462px;">CB 1</span>
<span class="t" style="left:1406.33px;top:380.73px;font-size:14.5px;line-height:14.5px;color:#555;letter-spacing:0.652px;">Maximum</span>
<span class="t" style="left:1514.13px;top:380.73px;font-size:14.5px;line-height:14.5px;color:#555;letter-spacing:-0.084px;">19.56</span>
<span class="t" style="left:1669.43px;top:380.73px;font-size:14.5px;line-height:14.5px;color:#555;letter-spacing:0.128px;">-700.00</span>
<span class="t" style="left:1738.83px;top:380.73px;font-size:14.5px;line-height:14.5px;color:#555;letter-spacing:0.009px;">0.00</span>
<span class="t" style="left:1807.73px;top:380.73px;font-size:14.5px;line-height:14.5px;color:#555;letter-spacing:0.145px;">-250.00</span>
<span class="t" style="left:1302.83px;top:417.33px;font-size:14.5px;line-height:14.5px;color:#555;letter-spacing:-0.462px;">CB 1</span>
<span class="t" style="left:1406.33px;top:417.33px;font-size:14.5px;line-height:14.5px;color:#555;letter-spacing:0.773px;">Minimum</span>
<span class="t" style="left:1514.13px;top:417.33px;font-size:14.5px;line-height:14.5px;color:#555;letter-spacing:-0.099px;">3.11</span>
<span class="t" style="left:1669.43px;top:417.33px;font-size:14.5px;line-height:14.5px;color:#555;letter-spacing:-0.120px;">250.00</span>
<span class="t" style="left:1738.83px;top:417.33px;font-size:14.5px;line-height:14.5px;color:#555;letter-spacing:0.009px;">0.00</span>
<span class="t" style="left:1807.73px;top:417.33px;font-size:14.5px;line-height:14.5px;color:#555;letter-spacing:-0.080px;">700.00</span>
<div class="abs" style="left:1263px;top:655.6px;width:645.6px;height:1.6px;background:#d6d6d6"></div>
<div class="abs" style="left:0;top:0;width:1915px;height:80px;background:#000"></div>
<div class="abs" style="left:0;top:80px;width:1915px;height:4.7px;background:#f36f21"></div>
<div class="abs" style="left:744px;top:75.2px;width:112px;height:6px;background:#f36f21"></div>
<div class="abs" style="left:21.2px;top:26.8px;width:84.6px;height:26.8px;background:#f36f21;transform:skewX(-18deg);overflow:hidden"><span style="position:absolute;left:4px;top:-3.6px;font-size:30.5px;line-height:34px;font-weight:700;color:#000;letter-spacing:1.8px;-webkit-text-stroke:1.7px #000;white-space:nowrap;transform:scaleX(1.0);transform-origin:0 0">IDEA</span></div>
<span class="t" style="left:112.79px;top:26.67px;font-size:28.5px;line-height:28.5px;color:#fff;font-weight:700;font-style:italic;letter-spacing:0.276px;">StatiCa</span>
<span class="t" style="left:214.40px;top:29.04px;font-size:10px;line-height:10px;color:#fff;">®</span>
<span class="t" style="left:232.81px;top:35.74px;font-size:19.8px;line-height:19.8px;color:#f0f0f0;letter-spacing:-0.693px;transform:scaleX(0.9454);">DETAIL</span>
<span class="t" style="left:782.45px;top:10.99px;font-size:17.5px;line-height:17.5px;color:#f2f2f2;letter-spacing:0.405px;">3D Anchoring.ideaDet</span>
<span class="t" style="left:520.51px;top:50.74px;font-size:19.8px;line-height:19.8px;color:#fff;letter-spacing:-0.693px;transform:scaleX(0.8879);">PROJECT</span>
<span class="t" style="left:648.51px;top:50.74px;font-size:19.8px;line-height:19.8px;color:#fff;letter-spacing:-0.693px;transform:scaleX(0.9621);">DESIGN</span>
<span class="t" style="left:768.51px;top:50.74px;font-size:19.8px;line-height:19.8px;color:#f36f21;letter-spacing:-0.693px;transform:scaleX(0.934);">CHECK</span>
<span class="t" style="left:880.31px;top:50.74px;font-size:19.8px;line-height:19.8px;color:#fff;letter-spacing:-0.693px;transform:scaleX(0.8904);">REPORT</span>
<span class="t" style="left:1001.01px;top:50.74px;font-size:19.8px;line-height:19.8px;color:#fff;letter-spacing:-0.693px;transform:scaleX(0.959);">MATERIALS</span>
<svg class="abs" style="left:1760px;top:0" width="155" height="40" viewBox="1760 0 155 40" fill="none" stroke="#e8e8e8" stroke-width="1.1">
<path d="M1775 20.5H1787" stroke="#9a9a9a"/>
<rect x="1835.5" y="17" width="7.5" height="7.5"/><path d="M1838 17V14.8H1845.7V22.4H1843"/>
<path d="M1891.5 14.5L1903 25.8M1903 14.5L1891.5 25.8"/></svg>
<div class="abs" style="left:1642.5px;top:47.5px;width:228px;height:25px;background:#fff"></div>
<span class="t" style="left:1649.10px;top:52.60px;font-size:15px;line-height:15px;color:#b4b4b4;letter-spacing:-0.065px;">Search on ideastatica.com</span>
<svg class="abs" style="left:1848px;top:52px" width="18" height="16" viewBox="1848 52 18 16" fill="none" stroke="#b4b4b4" stroke-width="1.3"><circle cx="1855.3" cy="58.7" r="4.7"/><path d="M1858.8 62.2L1863.6 66.4"/></svg>
<div class="abs" style="left:1893.2px;top:49.9px;width:19.4px;height:19.4px;border-radius:50%;background:#f36f21"></div>
<span class="t" style="left:1899.67px;top:52.48px;font-size:15.5px;line-height:15.5px;color:#000;font-weight:700;">i</span>
<div class="abs" style="left:0;top:84.7px;width:1915px;height:121px;background:#f5f5f5"></div>
<div class="abs" style="left:0;top:205.6px;width:1249px;height:1.4px;background:#c9c9c9"></div>
<div class="abs" style="left:329.1px;top:88.1px;width:47.3px;height:93.2px;background:#dedede"></div>
<div class="abs" style="left:1016px;top:88px;width:57.9px;height:93.3px;background:#dedede"></div>
<div class="abs" style="left:1084px;top:88px;width:87.3px;height:93.2px;background:#dedede"></div>
<div class="abs" style="left:1394.3px;top:88px;width:70.7px;height:82.0px;background:#dedede"></div>
<div class="abs" style="left:1600.1px;top:88px;width:124.0px;height:25.8px;background:#dedede"></div>
<div class="abs" style="left:0;top:87px;width:86px;height:37.8px;background:#f36f21"></div>
<span class="t" style="left:2.96px;top:99.85px;font-size:14px;line-height:14px;color:#fff;letter-spacing:0.703px;">Detail1</span>
<div class="abs" style="left:1786.1px;top:87.3px;width:75.2px;height:30.2px;background:#fff;border:1px solid #ababab;box-sizing:border-box"></div>
<div class="abs" style="left:116.75px;top:87.3px;width:1.3px;height:115.2px;background:#b2b2b2"></div>
<div class="abs" style="left:194.75px;top:87.3px;width:1.3px;height:115.2px;background:#b2b2b2"></div>
<div class="abs" style="left:323.95px;top:87.3px;width:1.3px;height:115.2px;background:#b2b2b2"></div>
<div class="abs" style="left:467.95px;top:87.3px;width:1.3px;height:115.2px;background:#b2b2b2"></div>
<div class="abs" style="left:532.75px;top:87.3px;width:1.3px;height:115.2px;background:#b2b2b2"></div>
<div class="abs" style="left:620.55px;top:87.3px;width:1.3px;height:115.2px;background:#b2b2b2"></div>
<div class="abs" style="left:1078.85px;top:87.3px;width:1.3px;height:115.2px;background:#b2b2b2"></div>
<div class="abs" style="left:1727.05px;top:87.3px;width:1.3px;height:115.2px;background:#b2b2b2"></div>
<div class="abs" style="left:1863.35px;top:87.3px;width:1.3px;height:115.2px;background:#b2b2b2"></div>
<span class="t" style="left:151.86px;top:98.55px;font-size:14px;line-height:14px;color:#1c1c1c;letter-spacing:1.077px;">Undo</span>
<span class="t" style="left:151.86px;top:128.65px;font-size:14px;line-height:14px;color:#c6c6c6;letter-spacing:0.743px;">Redo</span>
<span class="t" style="left:151.86px;top:159.15px;font-size:14px;line-height:14px;color:#1c1c1c;">Save</span>
<span class="t" style="left:10.86px;top:187.45px;font-size:14px;line-height:14px;color:#1c1c1c;letter-spacing:0.524px;">Project items</span>
<span class="t" style="left:140.46px;top:187.45px;font-size:14px;line-height:14px;color:#1c1c1c;letter-spacing:0.842px;">Data</span>
<span class="t" style="left:238.96px;top:187.45px;font-size:14px;line-height:14px;color:#1c1c1c;letter-spacing:0.389px;">Labels</span>
<span class="t" style="left:379.36px;top:187.45px;font-size:14px;line-height:14px;color:#1c1c1c;letter-spacing:0.977px;">Draw</span>
<span class="t" style="left:474.76px;top:187.45px;font-size:14px;line-height:14px;color:#1c1c1c;letter-spacing:0.232px;">Pictures</span>
<span class="t" style="left:539.46px;top:187.45px;font-size:14px;line-height:14px;color:#1c1c1c;letter-spacing:0.624px;">Calculation</span>
<span class="t" style="left:787.86px;top:187.45px;font-size:14px;line-height:14px;color:#1c1c1c;letter-spacing:0.334px;">Code-check results</span>
<span class="t" style="left:1380.16px;top:187.45px;font-size:14px;line-height:14px;color:#1c1c1c;letter-spacing:0.019px;">Results</span>
<span class="t" style="left:1777.46px;top:187.45px;font-size:14px;line-height:14px;color:#1c1c1c;letter-spacing:0.170px;">Scale</span>
<span class="t" style="left:202.76px;top:134.25px;font-size:14px;line-height:14px;color:#1c1c1c;letter-spacing:0.276px;">Edges</span>
<span class="t" style="left:200.56px;top:154.45px;font-size:14px;line-height:14px;color:#1c1c1c;letter-spacing:0.495px;">names</span>
<span class="t" style="left:248.36px;top:134.25px;font-size:14px;line-height:14px;color:#c6c6c6;letter-spacing:0.670px;">Dimension</span>
<span class="t" style="left:269.06px;top:154.45px;font-size:14px;line-height:14px;color:#c6c6c6;letter-spacing:0.476px;">lines</span>
<span class="t" style="left:329.96px;top:134.25px;font-size:14px;line-height:14px;color:#c6c6c6;letter-spacing:0.153px;">Rebars</span>
<span class="t" style="left:385.16px;top:134.25px;font-size:14px;line-height:14px;color:#c6c6c6;letter-spacing:0.650px;">Grid</span>
<span class="t" style="left:424.66px;top:134.25px;font-size:14px;line-height:14px;color:#c6c6c6;letter-spacing:0.389px;">Loads</span>
<span class="t" style="left:626.36px;top:134.25px;font-size:14px;line-height:14px;color:#1c1c1c;letter-spacing:0.517px;">Summary</span>
<span class="t" style="left:692.66px;top:134.25px;font-size:14px;line-height:14px;color:#1c1c1c;letter-spacing:0.639px;">Strength</span>
<span class="t" style="left:753.66px;top:134.25px;font-size:14px;line-height:14px;color:#1c1c1c;letter-spacing:0.648px;">Anchorage</span>
<span class="t" style="left:843.26px;top:134.25px;font-size:14px;line-height:14px;color:#c6c6c6;letter-spacing:-0.155px;">Stress</span>
<span class="t" style="left:830.26px;top:154.45px;font-size:14px;line-height:14px;color:#c6c6c6;letter-spacing:1.029px;">limitation</span>
<span class="t" style="left:900.36px;top:134.25px;font-size:14px;line-height:14px;color:#c6c6c6;letter-spacing:0.285px;">Crack</span>
<span class="t" style="left:900.36px;top:154.45px;font-size:14px;line-height:14px;color:#c6c6c6;letter-spacing:1.329px;">width</span>
<span class="t" style="left:943.46px;top:134.25px;font-size:14px;line-height:14px;color:#c6c6c6;letter-spacing:0.572px;">Deflection</span>
<span class="t" style="left:1016.86px;top:134.25px;font-size:14px;line-height:14px;color:#1c1c1c;letter-spacing:0.587px;">Auxiliary</span>
<span class="t" style="left:1084.76px;top:134.25px;font-size:14px;line-height:14px;color:#1c1c1c;letter-spacing:0.974px;">Deformation</span>
<span class="t" style="left:1174.46px;top:134.25px;font-size:14px;line-height:14px;color:#1c1c1c;letter-spacing:0.605px;">Reinforcement</span>
<span class="t" style="left:1207.26px;top:154.45px;font-size:14px;line-height:14px;color:#1c1c1c;letter-spacing:1.091px;">ratio</span>
<span class="t" style="left:1307.06px;top:134.25px;font-size:14px;line-height:14px;color:#1c1c1c;letter-spacing:0.276px;">Tensor</span>
<span class="t" style="left:1275.96px;top:154.45px;font-size:14px;line-height:14px;color:#1c1c1c;letter-spacing:0.375px;">concrete values</span>
<span class="t" style="left:1395.36px;top:134.25px;font-size:14px;line-height:14px;color:#1c1c1c;letter-spacing:0.961px;">Deformed</span>
<span class="t" style="left:1409.96px;top:154.45px;font-size:14px;line-height:14px;color:#1c1c1c;letter-spacing:0.464px;">shape</span>
<span class="t" style="left:1479.76px;top:134.25px;font-size:14px;line-height:14px;color:#1c1c1c;letter-spacing:0.689px;">Ux</span>
<span class="t" style="left:1524.16px;top:134.25px;font-size:14px;line-height:14px;color:#1c1c1c;letter-spacing:0.989px;">Uy</span>
<span class="t" style="left:1568.56px;top:134.25px;font-size:14px;line-height:14px;color:#1c1c1c;letter-spacing:0.889px;">Uz</span>
<span class="t" style="left:1606.16px;top:95.15px;font-size:14px;line-height:14px;color:#1c1c1c;letter-spacing:0.501px;">Draw mesh</span>
<span class="t" style="left:1729.96px;top:93.15px;font-size:14px;line-height:14px;color:#1c1c1c;letter-spacing:0.245px;">Scale</span>
<span class="t" style="left:1805.86px;top:95.55px;font-size:14px;line-height:14px;color:#1c1c1c;letter-spacing:0.350px;">5.00</span>
<svg class="abs" style="left:0;top:84px" width="1915" height="125" viewBox="0 84 1915 125" fill="none" stroke-linecap="butt">
<path d="M68 104L72.7 109.3L77.4 104" stroke="#fff" stroke-width="1.2"/>
<g stroke="#1c1c1c" stroke-width="1.5"><path d="M94.8 128.6V119.6L100.6 113.6H103M108.5 119.5V128.6H94.8M94.8 119.8H100.8V113.8"/>
<path d="M94.8 158.9V149.6L100.6 143.6H108.5V158.9Z M94.8 149.8H100.8V143.8"/></g>
<path d="M104.4 113.3H111.4M107.9 109.8V116.8M102.7 140.9H111.4V157.4" stroke="#f36f21" stroke-width="1.3"/>
<path d="M125.5 97.6H133.4A7.75 7.75 0 0 1 133.4 113.1H125.2M129.2 93.9L125.5 97.6L129.2 101.3" stroke="#1c1c1c" stroke-width="1.4"/>
<path d="M139.4 128H131.6A7.75 7.75 0 0 0 131.6 143.5H139.6M135.8 124.3L139.5 128L135.8 131.7" stroke="#bcbcbc" stroke-width="1.3"/>
<path d="M122.9 169.8V173.6H141.7V169.8" stroke="#1c1c1c" stroke-width="1.5"/><path d="M132.3 154.7V168.6M128.6 164.9L132.3 168.6L136 164.9" stroke="#f36f21" stroke-width="1.3"/>
<path d="M203.2 125.7L216.7 91.7H229L243.2 125.7H234L231.3 119.3H214.6L212.2 125.7ZM217.3 112.3L223.1 100.3L228.9 112.3Z" stroke="#1c1c1c" stroke-width="1.4" stroke-linejoin="miter"/>
<path d="M264.8 100.1V123.1M304.3 100.1V123.1M265.4 101.9H303.7M270.8 97L265.6 101.9L270.8 106.8M298.3 97L303.5 101.9L298.3 106.8" stroke="#c2c2c2" stroke-width="1.3"/>
<rect x="340.2" y="89.8" width="25.8" height="38.3" rx="5.5" stroke="#b4b4b4" stroke-width="1.5"/>
<g fill="#b4b4b4"><circle cx="345.6" cy="95.2" r="1.1"/><circle cx="360.7" cy="95.2" r="1.1"/><circle cx="345.6" cy="122.7" r="2.2"/><circle cx="360.7" cy="122.7" r="2.2"/></g>
<path d="M387.6 89.4V128.7M379.7 120.6H419.4" stroke="#c2c2c2" stroke-width="1.3"/>
<path d="M424.2 128.3H463.8M433.4 95.5V127.6M443.4 95.5V127.6M453.5 95.5V127.6M428.4 122.6L433.4 127.6L438.4 122.6L443.4 127.6L448.4 122.6L453.5 127.6L458.5 122.6" stroke="#c2c2c2" stroke-width="1.2"/>
<g stroke="#1c1c1c" stroke-width="1.5"><path d="M503 113.4H492.2V129.1H508.7V120"/><path d="M492.3 127.6L498.2 121.8L501.6 124.9L505.4 120.2L508.7 123"/><rect x="492.2" y="143.6" width="16.2" height="15.8"/><path d="M492.3 157.6L498.2 151.8L501.6 154.9L505.4 150.4L508.4 153"/><path d="M494.5 141H511V157.6" stroke-width="1.2"/></g>
<circle cx="499.6" cy="117.8" r="1.1" fill="#1c1c1c"/><circle cx="499.6" cy="148" r="1.1" fill="#1c1c1c"/>
<path d="M504.7 113.8H511.5M508.1 110.4V117.2" stroke="#f36f21" stroke-width="1.3"/>
<path d="M574.9 113.0L575.5 110.4L578.9 110.4L579.5 113.0L580.6 113.4L582.8 112.0L585.2 114.4L583.8 116.6L584.2 117.7L586.8 118.3L586.8 121.7L584.2 122.3L583.8 123.4L585.2 125.6L582.8 128.0L580.6 126.6L579.5 127.0L578.9 129.6L575.5 129.6L574.9 127.0L573.8 126.6L571.6 128.0L569.2 125.6L570.6 123.4L570.2 122.3L567.6 121.7L567.6 118.3L570.2 117.7L570.6 116.6L569.2 114.4L571.6 112.0L573.8 113.4Z" stroke="#1c1c1c" stroke-width="1.3" stroke-linejoin="round"/>
<path d="M574.6 117.2L572 120L574.6 122.8M579.8 117.2L582.4 120L579.8 122.8M578.4 116L576 124" stroke="#1c1c1c" stroke-width="1.1"/>
<rect x="568" y="141.3" width="18.3" height="18.2" stroke="#1c1c1c" stroke-width="1.5"/>
<path d="M570.3 146.3H575.7M573 143.6V149M579 146.3H584.6M571 152.5L575 156.5M575 152.5L571 156.5M579 154.5H584.6M581.8 152.3V152.9M581.8 156.1V156.7" stroke="#f36f21" stroke-width="1.2"/>
<path d="M676.9 104.0A19.4 19.4 0 1 1 675.2 99.6" stroke="#2a2a2a" stroke-width="1.4"/>
<path d="M672.0 109.7A13.9 13.9 0 1 1 664.6 96.4" stroke="#2a2a2a" stroke-width="1.4"/>
<path d="M648.9 107.7L658.3 115.8L678 95.5L673.9 92.1L658.1 108.4L652.4 104.1Z" stroke="#f36f21" stroke-width="1.4"/>
<path d="M720.9 89.4V128.7M701.7 122.3H720.9" stroke="#2a2a2a" stroke-width="1.4"/><path d="M720.9 90H741.6A20.4 19.3 0 0 1 721.3 109.3" stroke="#f36f21" stroke-width="1.3"/>
<path d="M771 113.8H802.6A6.65 6.65 0 0 0 802 100.5" stroke="#2a2a2a" stroke-width="1.4"/>
<path d="M863.3 90H878.5L848.2 128.3H863.3" stroke="#f8c6a6" stroke-width="1.2"/><path d="M863.3 89.4V128.4" stroke="#bdbdbd" stroke-width="1.2"/>
<path d="M899.2 128.3H939.2" stroke="#bdbdbd" stroke-width="1.2"/><path d="M912.6 109.3L914.6 112.5L911.6 116.5L914.2 120.5L911.8 124.2L913.6 127.8M925.4 109.3L927.4 112.5L924.4 116.5L927 120.5L924.6 124.2L926.4 127.8" stroke="#f8c6a6" stroke-width="1.2"/>
<path d="M962.2 111.3Q978.6 120.8 995.1 111.3" stroke="#f8c6a6" stroke-width="1.2"/><circle cx="962.2" cy="111.2" r="2.4" fill="#f8c6a6"/><circle cx="995.1" cy="111.2" r="2.4" fill="#f8c6a6"/><path d="M962.2 115.4L958.7 122.4H965.7ZM995.1 115.4L991.6 122.4H998.6Z" stroke="#bdbdbd" stroke-width="1.3"/>
<g fill="#000"><circle cx="1029.9" cy="109" r="4"/><circle cx="1045.8" cy="109" r="4"/><circle cx="1062.4" cy="109" r="4"/></g>
<path d="M1111.7 111.6Q1128.1 121.2 1144.5 111.6" stroke="#f36f21" stroke-width="1.3"/><circle cx="1111.7" cy="111.5" r="2.5" fill="#f36f21"/><circle cx="1144.5" cy="111.5" r="2.5" fill="#f36f21"/><path d="M1111.7 115.6L1108.2 122.5H1115.2ZM1144.5 115.6L1141 122.5H1148Z" stroke="#1c1c1c" stroke-width="1.4"/>
<g stroke="#1c1c1c" stroke-width="1.4"><circle cx="1223.3" cy="109.7" r="11.6"/><circle cx="1232.5" cy="100.3" r="11.6"/><path d="M1231.6 117.9L1240.8 108.5M1215 101.5L1224.2 92.1M1223.3 109.7L1204 128.3"/></g>
<g stroke="#1c1c1c" stroke-width="1.4"><circle cx="1328.2" cy="111.8" r="11.4"/><path d="M1328.2 111.8V90M1323.6 95L1328.2 90L1332.8 95M1328.2 111.8L1309.4 102M1310.2 108L1309.2 101.9L1315.3 100.6M1328.2 111.8L1347 102M1346.2 108L1347.2 101.9L1341.1 100.6"/></g>
<path d="M1417.5 89.2Q1413.5 104 1417 118T1419.5 128.5M1429.5 89.2Q1431.5 100 1428.8 110T1431 128.5M1441 89.2Q1445 102 1441.5 114T1441.2 128.5M1409.6 97.6Q1420 94 1430 96.5T1450 98M1409.6 109.5Q1420 107 1432 108.5T1450 109M1409.6 121Q1420 121.5 1430 119.5T1450 121" stroke="#1c1c1c" stroke-width="1.4"/>
<path d="M1468.8 89.4V128.9M1469.4 128.3L1499 98.2" stroke="#1c1c1c" stroke-width="1.4"/><path d="M1468.8 128.3H1508" stroke="#f36f21" stroke-width="1.3"/>
<path d="M1513.2 89.4V128.3H1552.8" stroke="#1c1c1c" stroke-width="1.4"/><path d="M1513.8 127.8L1543.3 98.2" stroke="#f36f21" stroke-width="1.3"/>
<path d="M1557 128.3H1596.8M1558.1 127.8L1587.6 98.2" stroke="#1c1c1c" stroke-width="1.4"/><path d="M1557.5 89.4V128.3" stroke="#f36f21" stroke-width="1.3"/>
<path d="M1847.4 97.6L1852.2 93.2L1857 97.6M1847.4 108.8L1852.2 113.2L1857 108.8" stroke="#1c1c1c" stroke-width="1.2"/>
</svg>
<div class="abs" style="left:1008px;top:80px;width:70.6px;height:105.8px;border:4.7px solid #ff3232;border-radius:10px;box-sizing:border-box"></div>
<div class="abs" style="left:1387.2px;top:80px;width:86.6px;height:105.8px;border:4.7px solid #ff3232;border-radius:10px;box-sizing:border-box"></div>
<div class="abs" style="left:1782.2px;top:80.6px;width:86.0px;height:34.3px;border:4.7px solid #ff3232;border-radius:10px;box-sizing:border-box"></div>
<span class="t" style="left:974.28px;top:152.41px;font-size:32px;line-height:32px;color:#ff3232;font-weight:700;transform:scaleX(1.05);">1</span>
<span class="t" style="left:1421.02px;top:44.97px;font-size:33px;line-height:33px;color:#ff3232;font-weight:700;transform:scaleX(0.95);">2</span>
<span class="t" style="left:1816.05px;top:120.39px;font-size:32.5px;line-height:32.5px;color:#ff3232;font-weight:700;transform:scaleX(0.95);">3</span>
</body></html>
